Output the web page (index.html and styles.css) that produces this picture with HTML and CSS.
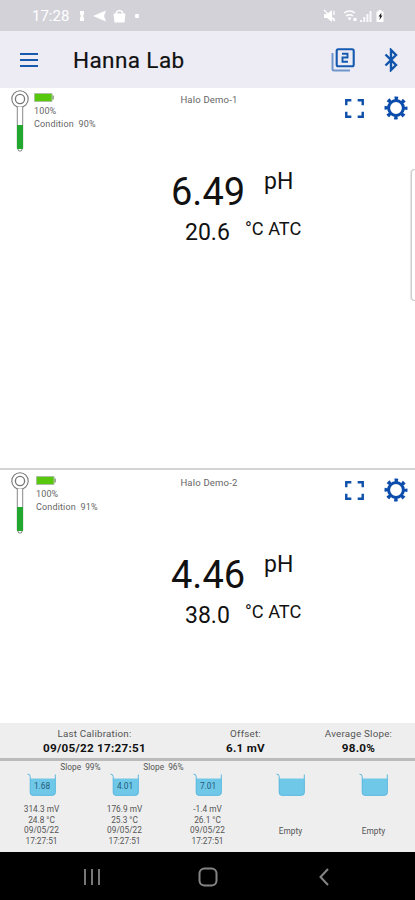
FILE: index.html
```html
<!DOCTYPE html>
<html lang="en">
<head>
    <meta charset="UTF-8">
    <meta name="viewport" content="width=device-width, initial-scale=1.0">
    <title>Hanna Lab</title>
    <link rel="stylesheet" href="styles.css">
</head>
<body>
    <svg class="defs" width="0" height="0">
        <symbol id="probe" viewBox="0 0 20 64">
            <circle cx="10" cy="10" r="8.2" fill="#fff" stroke="#777" stroke-width="1.1"/>
            <circle cx="10" cy="10" r="4.6" fill="#fff" stroke="#777" stroke-width="1.3"/>
            <path d="M7.3 18v41l1.5 3h2.4l1.5-3V18" fill="#fff" stroke="#888"/>
            <path d="M7 36h6v24H7z" fill="#22a82e"/>
        </symbol>
        <symbol id="battery" viewBox="0 0 20 9">
            <path d="M.5.5h17.500v8H.5z" fill="#58c80c" stroke="#a9bf9f"/>
            <path d="M18.500 2.500h1.200v4h-1.200z" fill="#6d8a5c"/>
        </symbol>
        <symbol id="fullscreen" viewBox="0 0 18 18">
            <path d="M1.200 6V1.200H6M12 1.200h4.800V6M16.800 12v4.800H12M6 16.800H1.200V12" fill="none" stroke="#0e50aa" stroke-width="2.300"/>
        </symbol>
        <symbol id="gear" viewBox="0 0 24 24">
            <circle cx="12" cy="12" r="9.800" fill="none" stroke="#0b4cac" stroke-width="3.400" stroke-dasharray="3.500 4.197" stroke-dashoffset="1.750"/>
            <circle cx="12" cy="12" r="7.400" fill="#fff" stroke="#0b4cac" stroke-width="3"/>
        </symbol>
        <symbol id="beaker" viewBox="0 0 30 24">
            <path d="M3 5.500h25.500v14q0 3-3 3H6q-3 0-3-3z" fill="#70c8e8"/>
            <path d="M.5 1.200q2.700-.2 2.700 2.300v16q0 2.800 2.800 2.800h19.500q2.800 0 2.800-2.800V1.500" fill="none" stroke="#5bb8df"/>
        </symbol>
    </svg>

    <div class="status-bar">
        <span class="clock">17:28</span>
        <svg class="notifications" width="64" height="16" viewBox="0 0 64 16" fill="#fff">
            <path d="M3 3h4v3l-1 2 1 2v3H3v-3l1-2-1-2z"/>
            <path d="M16 8l13-5.500-2 5.500 2 5.500z"/>
            <path d="M36.500 5.500h12l-1 9h-10z"/>
            <path d="M39.500 6V4q3-3 6 0v2" fill="none" stroke="#fff" stroke-width="1.500"/>
            <circle cx="60" cy="8" r="2.200"/>
        </svg>
        <svg class="signals" width="64" height="16" viewBox="0 0 64 16" fill="#fff">
            <path d="M2 6h3l5-4v12l-5-4H2z"/>
            <path d="M2 2l11 11M12 3v4M12 10v3" stroke="#fff" stroke-width="1.300"/>
            <path d="M22 5q5.500-4 11 0M24 8q3.500-2.500 7 0" fill="none" stroke="#fff" stroke-width="1.400"/>
            <path d="M25.500 9.500h4l-2 3zM31.500 10h3v3h-3z"/>
            <path d="M38 14v-2h2v2zM41.200 14v-5h2v5zM44.400 14V6h2v8zM47.500 14V3h2v11z" opacity=".85"/>
            <path d="M54.500 3.500h2V2h3v1.500h2V14h-7z"/>
            <path d="M59.500 4.500l-3 4h1.500l-.5 3.500 3-4.500H59z" fill="#222"/>
        </svg>
    </div>

    <header class="app-bar">
        <svg class="menu-icon" width="18" height="14" viewBox="0 0 18 14">
            <path d="M0 1h18M0 7h18M0 13h18" stroke="#165aaf" stroke-width="2"/>
        </svg>
        <h1>Hanna Lab</h1>
        <svg class="pages-icon" width="24" height="24" viewBox="0 0 24 24" fill="none">
            <path d="M1.500 5v16q0 1.500 1.500 1.500h16" stroke="#6f95cb" stroke-width="2"/>
            <rect x="5.700" y="1.200" width="17" height="17" rx="1.500" stroke="#155ab0" stroke-width="2.100"/>
            <path d="M11 5.800h5.500v3.700h-5v4.300h5.500" stroke="#155ab0" stroke-width="1.900"/>
        </svg>
        <svg class="bluetooth-icon" width="14" height="24" viewBox="0 0 14 24">
            <path d="M1.500 6.500l10.500 10.500-5 5V2l5 5L1.500 17.500" fill="none" stroke="#1054ac" stroke-width="2.400"/>
        </svg>
    </header>

    <section class="panel">
        <div class="panel-head">
            <div class="probe-info">
                <svg class="probe"><use href="#probe"/></svg>
                <div class="probe-text">
                    <svg class="battery"><use href="#battery"/></svg>
                    <span>100%</span>
                    <span>Condition&nbsp; 90%</span>
                </div>
            </div>
            <div class="panel-title">Halo Demo-1</div>
            <div class="panel-actions">
                <svg class="fullscreen"><use href="#fullscreen"/></svg>
                <svg class="gear"><use href="#gear"/></svg>
            </div>
        </div>
        <div class="reading ph">
            <span class="value">6.49</span>
            <span class="unit">pH</span>
        </div>
        <div class="reading temp">
            <span class="value">20.6</span>
            <span class="unit">°C ATC</span>
        </div>
        <div class="edge-handle"></div>
    </section>

    <section class="panel second">
        <div class="panel-head">
            <div class="probe-info">
                <svg class="probe"><use href="#probe"/></svg>
                <div class="probe-text">
                    <svg class="battery"><use href="#battery"/></svg>
                    <span>100%</span>
                    <span>Condition&nbsp; 91%</span>
                </div>
            </div>
            <div class="panel-title">Halo Demo-2</div>
            <div class="panel-actions">
                <svg class="fullscreen"><use href="#fullscreen"/></svg>
                <svg class="gear"><use href="#gear"/></svg>
            </div>
        </div>
        <div class="reading ph">
            <span class="value">4.46</span>
            <span class="unit">pH</span>
        </div>
        <div class="reading temp">
            <span class="value">38.0</span>
            <span class="unit">°C ATC</span>
        </div>
    </section>

    <section class="summary">
        <div><span>Last Calibration:</span><strong>09/05/22 17:27:51</strong></div>
        <div><span>Offset:</span><strong>6.1 mV</strong></div>
        <div><span>Average Slope:</span><strong>98.0%</strong></div>
    </section>

    <section class="calibration">
        <div class="slopes">
            <span>Slope&nbsp; 99%</span>
            <span>Slope&nbsp; 96%</span>
        </div>
        <div class="buffers">
            <div class="buffer">
                <div class="beaker"><svg><use href="#beaker"/></svg><span>1.68</span></div>
                <p>314.3 mV</p><p>24.8 °C</p><p>09/05/22</p><p>17:27:51</p>
            </div>
            <div class="buffer">
                <div class="beaker"><svg><use href="#beaker"/></svg><span>4.01</span></div>
                <p>176.9 mV</p><p>25.3 °C</p><p>09/05/22</p><p>17:27:51</p>
            </div>
            <div class="buffer">
                <div class="beaker"><svg><use href="#beaker"/></svg><span>7.01</span></div>
                <p>-1.4 mV</p><p>26.1 °C</p><p>09/05/22</p><p>17:27:51</p>
            </div>
            <div class="buffer empty">
                <div class="beaker"><svg><use href="#beaker"/></svg></div>
                <p>Empty</p>
            </div>
            <div class="buffer empty">
                <div class="beaker"><svg><use href="#beaker"/></svg></div>
                <p>Empty</p>
            </div>
        </div>
    </section>

    <nav class="nav-bar">
        <svg width="18" height="18" viewBox="0 0 18 18"><path d="M2 1v16M9 1v16M16 1v16" stroke="#777" stroke-width="2"/></svg>
        <svg width="20" height="20" viewBox="0 0 20 20"><rect x="1.500" y="1.500" width="17" height="17" rx="5" fill="none" stroke="#858585" stroke-width="2"/></svg>
        <svg width="10" height="18" viewBox="0 0 10 18"><path d="M9 1L1.500 9 9 17" fill="none" stroke="#858585" stroke-width="2"/></svg>
    </nav>
</body>
</html>
```

FILE: styles.css
```css
* {
    box-sizing: border-box;
}
body {
    width: 415px;
    height: 900px;
    margin: 0;
    overflow: hidden;
    display: flex;
    flex-direction: column;
    background: #fff;
    color: #111;
    font-family: Roboto, sans-serif;
}
svg {
    display: block;
    flex: none;
}
.defs {
    position: absolute;
}
.status-bar {
    height: 31px;
    flex: none;
    display: flex;
    align-items: center;
    padding: 1px 25px 0 32px;
    background: #d3d2d9;
    color: #fff;
}
.clock {
    width: 38px;
    font-size: 15px;
}
.notifications {
    margin-left: 7px;
}
.signals {
    margin-left: auto;
    margin-right: 4px;
}
.app-bar {
    height: 57px;
    flex: none;
    display: flex;
    align-items: center;
    padding: 0 17px 0 20px;
    background: #edecf4;
}
h1 {
    margin: 0 0 0 35px;
    font-size: 22.5px;
    font-weight: 400;
    letter-spacing: 0.4px;
    -webkit-text-stroke: 0.2px #111;
}
.pages-icon {
    margin-left: auto;
    margin-right: 29px;
}
.panel {
    position: relative;
    height: 380px;
    flex: none;
}
.panel.second {
    height: 255px;
    border-top: 2px solid #d4d4d4;
}
.panel-head {
    display: grid;
    grid-template-columns: 1fr auto 1fr;
    align-items: start;
    height: 81px;
    padding: 1px 7px 0 10px;
    font-size: 9px;
    color: #666;
}
.second .panel-head {
    height: 82px;
}
.probe-info {
    display: flex;
}
.probe {
    width: 20px;
    height: 64px;
}
.probe-text {
    display: flex;
    flex-direction: column;
    gap: 2px;
    padding: 4px 0 0 4px;
    line-height: 11px;
    letter-spacing: 0.15px;
}
.second .probe-text {
    padding: 5px 0 0 6px;
}
.battery {
    width: 20px;
    height: 9px;
    margin-bottom: 2px;
}
.panel-title {
    padding-top: 4px;
    line-height: 13px;
    font-size: 9.5px;
    letter-spacing: 0.2px;
}
.second .panel-title {
    padding-top: 5px;
}
.panel-actions {
    display: flex;
    justify-content: flex-end;
    align-items: center;
    gap: 20px;
    padding-top: 7px;
}
.fullscreen {
    width: 19px;
    height: 19px;
}
.gear {
    width: 24px;
    height: 24px;
}
.reading {
    display: flex;
    white-space: nowrap;
}
.ph {
    height: 50px;
    padding-left: 171px;
}
.temp {
    padding-left: 185px;
}
.ph .value {
    width: 93px;
    font-size: 38px;
    line-height: 46px;
}
.ph .unit {
    font-size: 23px;
    line-height: 26px;
}
.temp .value {
    width: 60px;
    font-size: 23px;
    line-height: 28px;
}
.temp .unit {
    font-size: 18.2px;
    line-height: 20px;
}
.edge-handle {
    position: absolute;
    top: 81px;
    right: 0;
    width: 4px;
    height: 132px;
    border: 1px solid #ccc;
    border-right: 0;
    border-radius: 4px 0 0 4px;
    box-shadow: -1px 0 1px #e4e4e4;
}
.summary {
    height: 38px;
    flex: none;
    display: grid;
    grid-template-columns: 189px 113px 113px;
    padding-top: 4px;
    background: #eee;
    border-bottom: 3px solid #bbb;
    text-align: center;
}
.summary span,
.summary strong {
    display: block;
    line-height: 15px;
}
.summary span {
    font-size: 9.8px;
    line-height: 14px;
    color: #555;
    letter-spacing: 0.2px;
}
.summary strong {
    font-size: 11.7px;
    font-weight: 700;
    letter-spacing: 0.25px;
}
.calibration {
    height: 91px;
    flex: none;
    background: #eee;
    color: #555;
    font-size: 8.3px;
    text-align: center;
}
.slopes {
    display: flex;
    padding-left: 39px;
    line-height: 12px;
}
.slopes span {
    width: 83px;
}
.buffers {
    display: grid;
    grid-template-columns: repeat(5, 1fr);
}
.buffer p {
    margin: 0;
    line-height: 10.5px;
}
.beaker {
    position: relative;
    width: 30px;
    height: 24px;
    margin: 0 auto 7px;
}
.beaker svg {
    width: 30px;
    height: 24px;
}
.beaker span {
    position: absolute;
    inset: 8px 0 0 1px;
    line-height: 10px;
    color: #235a78;
}
.empty p {
    padding-top: 22px;
}
.nav-bar {
    height: 48px;
    flex: none;
    display: grid;
    grid-template-columns: repeat(3, 116px);
    justify-content: center;
    justify-items: center;
    align-items: center;
    padding: 2px 0 0 1px;
    background: #000;
}
```
